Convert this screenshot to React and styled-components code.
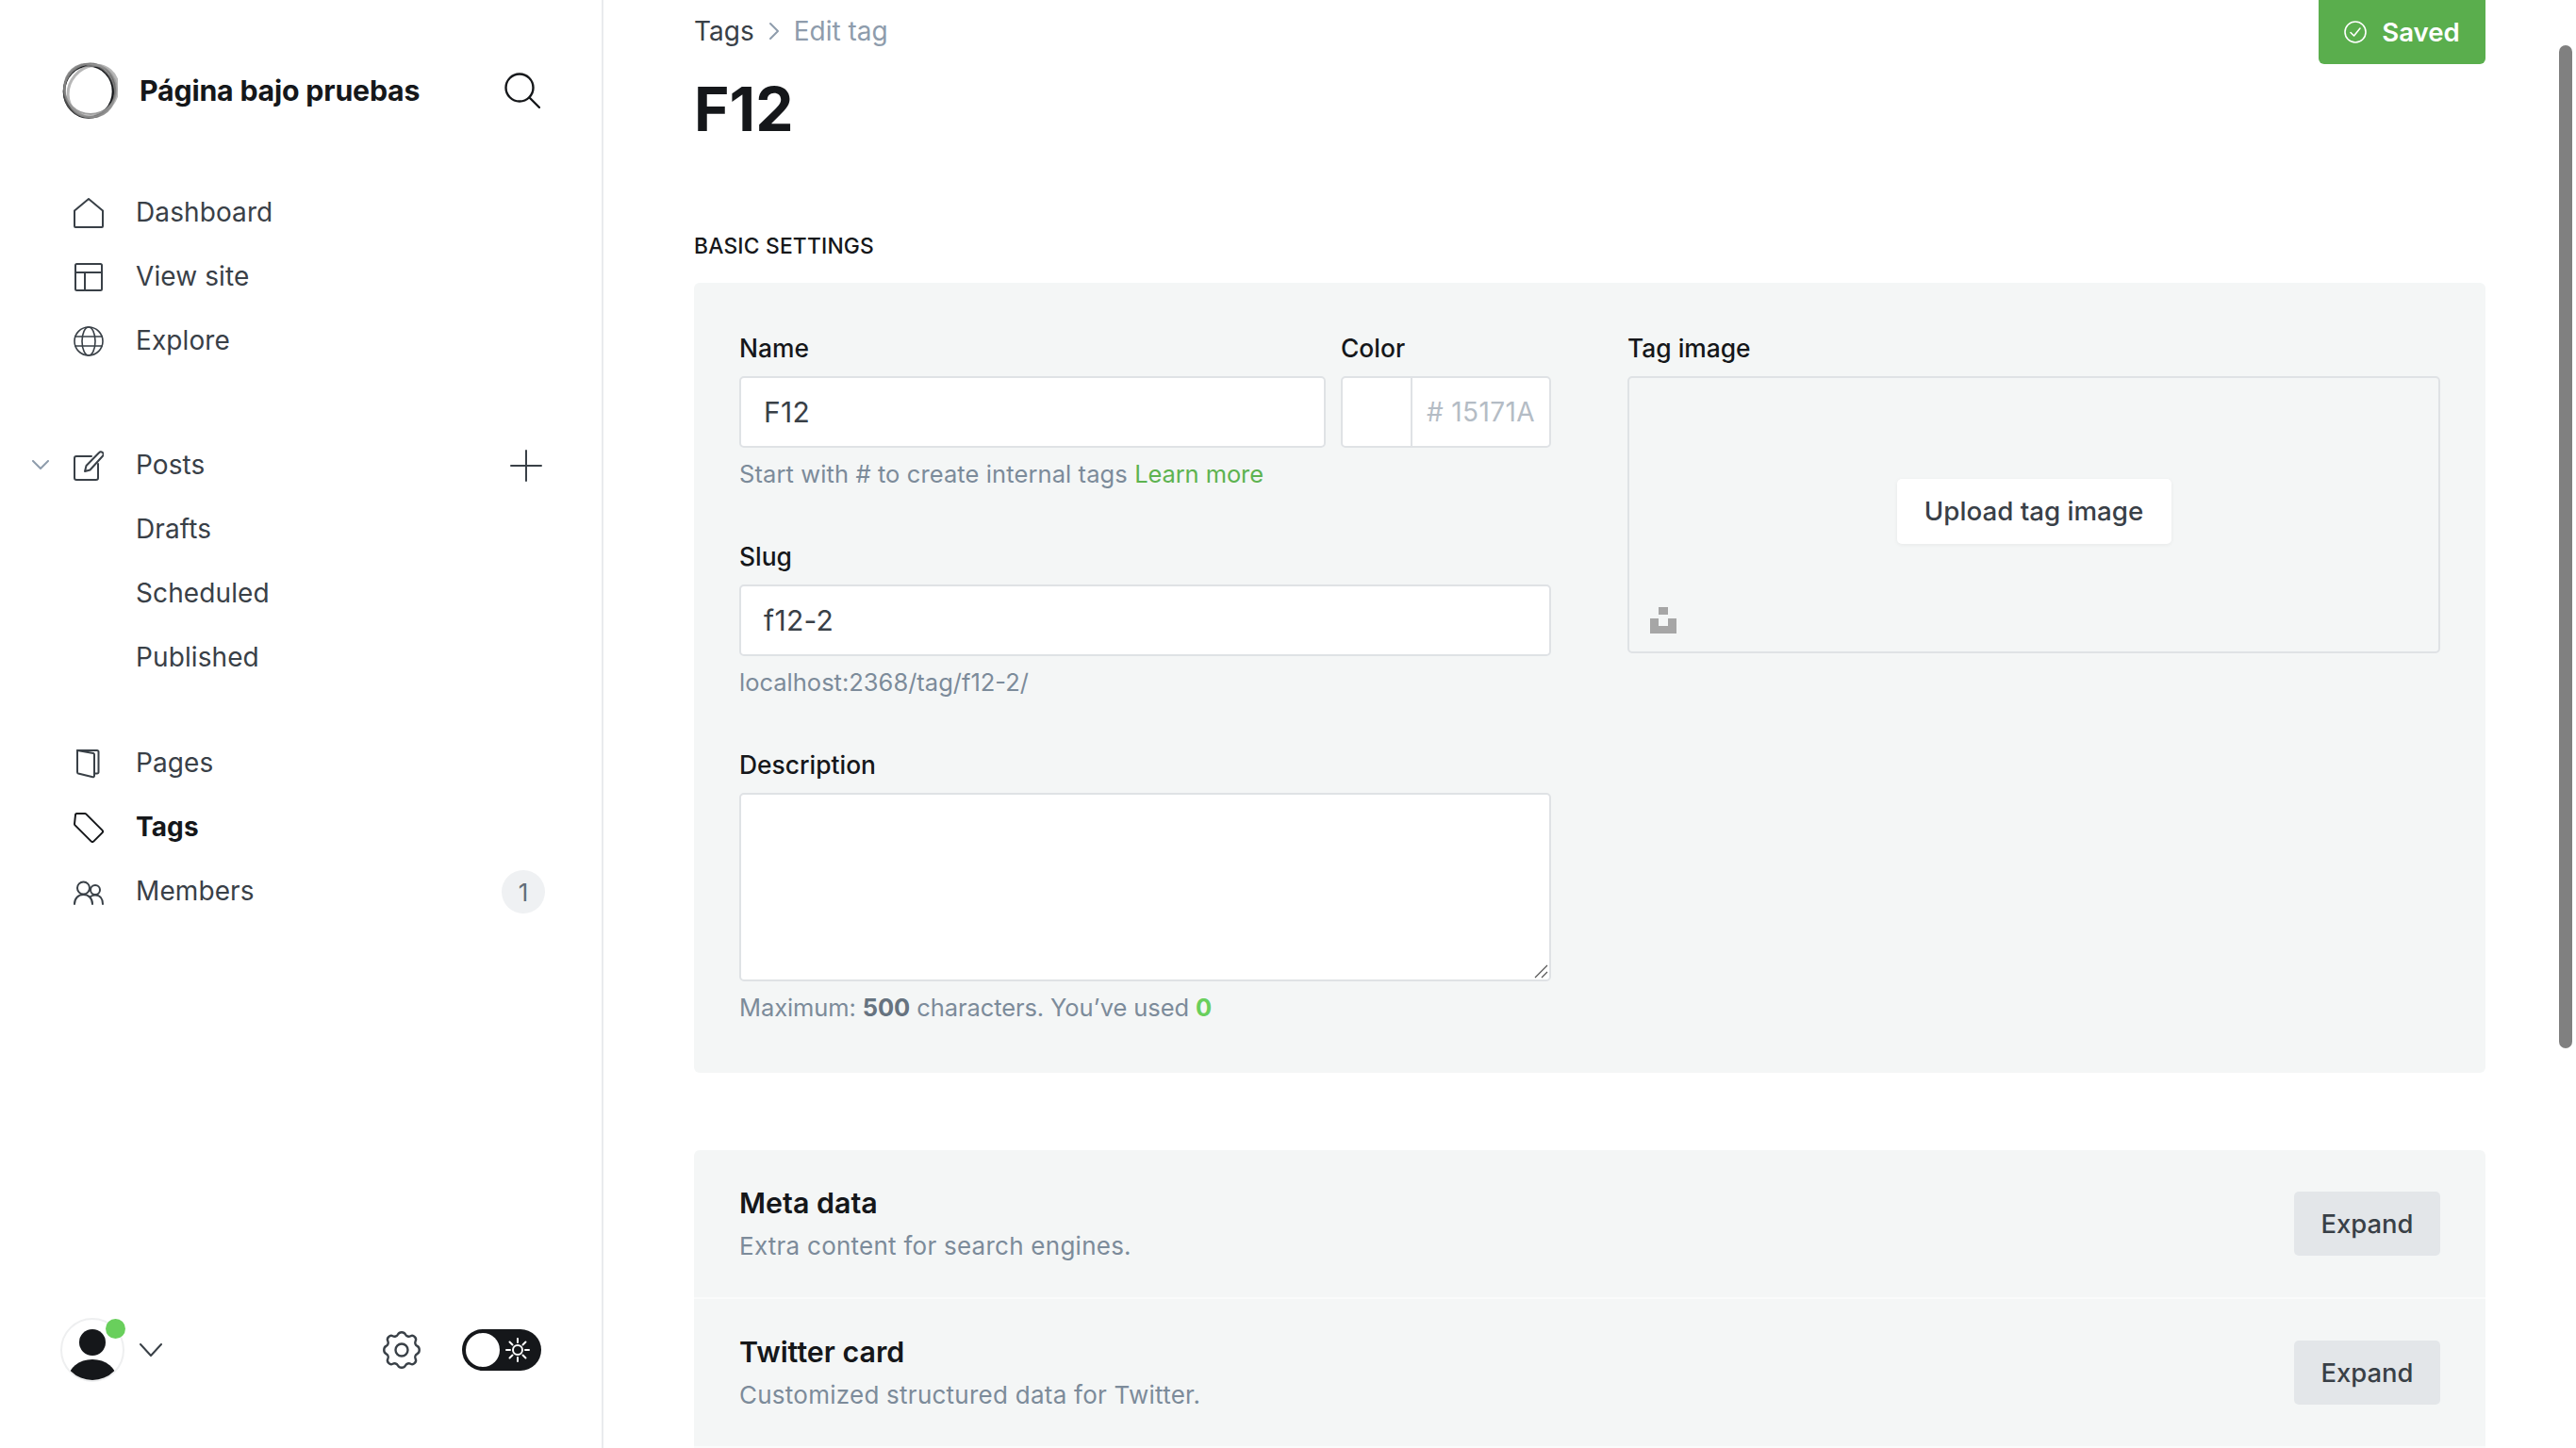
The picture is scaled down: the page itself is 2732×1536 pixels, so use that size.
import React from "react";
import styled, { createGlobalStyle } from "styled-components";

const Global = createGlobalStyle`
  html, body { margin: 0; padding: 0; background: #fff; overflow: hidden; }
  body { font-family: Inter, "Liberation Sans", sans-serif; color: #15171a; }
  * { box-sizing: border-box; }
`;

const Shell = styled.div`
  display: flex;
  width: 2732px;
  height: 1536px;
  position: relative;
  overflow: hidden;
`;

const Aside = styled.aside`
  width: 640px;
  flex: none;
  height: 100%;
  border-right: 2px solid #e9ebed;
  display: flex;
  flex-direction: column;
`;

const Brand = styled.div`
  display: flex;
  align-items: center;
  height: 64px;
  margin-top: 64px;
  padding: 0 65px;
`;

const SiteTitle = styled.div`
  margin-left: 23px;
  font-size: 30.3px;
  font-weight: 700;
  letter-spacing: -0.2px;
  flex: 1;
  white-space: nowrap;
`;

const SearchButton = styled.span`
  display: flex;
`;

const NavGroup = styled.nav`
  margin-top: ${(p) => p.$top}px;
  display: flex;
  flex-direction: column;
`;

const NavRow = styled.div`
  height: 68px;
  display: flex;
  align-items: center;
  padding: 0 60px 0 ${(p) => (p.$chevron ? 34 : 78)}px;
  font-size: 28px;
  letter-spacing: 0.1px;
  font-weight: ${(p) => (p.$active ? 700 : 400)};
  color: ${(p) => (p.$active ? "#15171a" : "#394047")};
`;

const NavChevron = styled.span`
  display: flex;
  width: 44px;
  flex: none;
`;

const NavIcon = styled.span`
  display: flex;
  justify-content: center;
  width: 32px;
  margin-right: 34px;
  margin-top: 2px;
  flex: none;
`;

const SubRow = styled(NavRow)`
  padding-left: 144px;
`;

const Trailing = styled.span`
  margin-left: auto;
  display: flex;
  align-items: center;
  margin-right: ${(p) => p.$inset || 0}px;
  margin-top: 2px;
`;

const Badge = styled.span`
  width: 46px;
  height: 46px;
  border-radius: 50%;
  background: #eff1f3;
  color: #626d79;
  font-size: 26px;
  display: flex;
  align-items: center;
  justify-content: center;
`;

const Footer = styled.div`
  margin-top: auto;
  margin-bottom: 70px;
  height: 68px;
  padding: 0 64px;
  display: flex;
  align-items: center;
`;

const Avatar = styled.span`
  position: relative;
  width: 68px;
  height: 68px;
  border-radius: 50%;
  border: 2px solid #eeeff0;
  background: #fff;
  display: block;
  flex: none;
  overflow: visible;
`;

const OnlineDot = styled.span`
  position: absolute;
  top: -1px;
  right: -3px;
  width: 21px;
  height: 21px;
  border-radius: 50%;
  background: #69cf5c;
`;

const FooterChevron = styled.span`
  display: flex;
  margin-left: 16px;
`;

const GearButton = styled.span`
  display: flex;
  margin-left: auto;
  margin-right: 43px;
`;

const Toggle = styled.span`
  width: 84px;
  height: 44px;
  border-radius: 22px;
  background: #15171a;
  display: flex;
  align-items: center;
  justify-content: space-between;
  padding: 0 12px 0 4px;
`;

const Knob = styled.span`
  width: 36px;
  height: 36px;
  border-radius: 50%;
  background: #fff;
`;

const Main = styled.main`
  flex: 1;
  min-width: 0;
  height: 100%;
  overflow: hidden;
  padding: 0 96px;
`;

const PageHead = styled.header`
  display: flex;
  justify-content: space-between;
  align-items: flex-start;
`;

const Crumbs = styled.div`
  height: 66px;
  display: flex;
  align-items: center;
  font-size: 28px;
  color: #394047;
`;

const CrumbSep = styled.span`
  display: flex;
  margin: 0 15px;
`;

const CrumbCurrent = styled.span`
  color: #8e9cac;
`;

const Title = styled.h1`
  margin: 14px 0 0;
  font-size: 64px;
  line-height: 72px;
  font-weight: 700;
  letter-spacing: 0;
`;

const SavedButton = styled.button`
  height: 68px;
  width: 177px;
  border: 0;
  border-radius: 0 0 6px 6px;
  background: #5aae4d;
  color: #fff;
  font: 600 27.6px Inter, sans-serif;
  display: flex;
  align-items: center;
  justify-content: center;
  gap: 16px;
`;

const SectionLabel = styled.h2`
  margin: 94px 0 0;
  font-size: 22.8px;
  line-height: 30px;
  font-weight: 500;
  letter-spacing: 0.2px;
  text-transform: uppercase;
`;

const Card = styled.section`
  margin-top: 24px;
  background: #f4f6f6;
  border-radius: 6px;
  padding: 54px 48px 54px 48px;
  display: grid;
  grid-template-columns: 861px 1fr;
  column-gap: 81px;
`;

const Column = styled.div`
  display: flex;
  flex-direction: column;
`;

const Field = styled.div`
  margin-bottom: ${(p) => p.$gap || 0}px;
`;

const NameRow = styled.div`
  display: grid;
  grid-template-columns: 622px 223px;
  column-gap: 16px;
`;

const Label = styled.label`
  display: block;
  height: 30px;
  line-height: 30px;
  font-size: 26.4px;
  font-weight: 500;
  margin-bottom: 15px;
  color: #15171a;
`;

const TextBox = styled.div`
  height: 76px;
  background: #fff;
  border: 2px solid #dfe2e5;
  border-radius: 5px;
  padding: 0 24px;
  display: flex;
  align-items: center;
  font-size: 30px;
  letter-spacing: 0.3px;
  color: #394047;
`;

const ColorBox = styled.div`
  height: 76px;
  background: #fff;
  border: 2px solid #dfe2e5;
  border-radius: 5px;
  display: grid;
  grid-template-columns: 72px 1fr;
`;

const ColorValue = styled.div`
  border-left: 2px solid #dfe2e5;
  display: flex;
  align-items: center;
  justify-content: center;
  font-size: 28px;
  letter-spacing: 0.4px;
  color: #b4bcc5;
`;

const TextArea = styled.div`
  height: 200px;
  background: #fff;
  border: 2px solid #dfe2e5;
  border-radius: 5px;
  position: relative;
`;

const Grip = styled.svg`
  position: absolute;
  right: 1px;
  bottom: 1px;
`;

const Help = styled.p`
  margin: 13px 0 0;
  height: 30px;
  line-height: 30px;
  font-size: 25.5px;
  letter-spacing: ${(p) => p.$spacing || "0"};
  color: #7c8b9a;
  white-space: nowrap;
`;

const LearnMore = styled.a`
  color: #5db350;
  letter-spacing: -0.1px;
`;

const Strong = styled.b`
  font-weight: 700;
  color: #667380;
`;

const Used = styled.b`
  font-weight: 700;
  color: #69cf5c;
`;

const ImageBox = styled.div`
  height: 294px;
  border: 2px solid #dfe2e5;
  border-radius: 5px;
  position: relative;
  display: flex;
  align-items: center;
  justify-content: center;
  padding-bottom: 8px;
`;

const UploadButton = styled.button`
  width: 291px;
  height: 69px;
  border: 0;
  border-radius: 5px;
  background: #fff;
  box-shadow: 0 1px 4px rgba(0, 0, 0, 0.06);
  font: 500 27.7px Inter, sans-serif;
  color: #394047;
`;

const UnsplashMark = styled.svg`
  position: absolute;
  left: 22px;
  bottom: 19px;
`;

const Stack = styled.section`
  margin-top: 82px;
  border-radius: 6px 6px 0 0;
  overflow: hidden;
`;

const StackRow = styled.div`
  height: 158px;
  background: #f4f6f6;
  padding: 0 48px;
  display: flex;
  align-items: center;
  justify-content: space-between;
  border-bottom: 2px solid #fafbfb;
`;

const RowTitle = styled.div`
  font-size: 30.4px;
  line-height: 34px;
  font-weight: 600;
`;

const RowSub = styled.div`
  margin-top: 14px;
  font-size: 26px;
  letter-spacing: 0.25px;
  line-height: 30px;
  color: #7c8b9a;
`;

const ExpandButton = styled.button`
  width: 155px;
  height: 68px;
  border: 0;
  border-radius: 5px;
  background: #e3e6e9;
  color: #394047;
  font: 500 27.4px Inter, sans-serif;
`;

const ScrollThumb = styled.div`
  position: absolute;
  top: 48px;
  left: 2714px;
  width: 14px;
  height: 1064px;
  border-radius: 7px;
  background: #808080;
`;

const Ic = ({ size = 32, w, h, stroke = "#394047", sw = 2, children, vb }) => (
  <svg
    width={w || size}
    height={h || size}
    viewBox={vb || `0 0 ${w || size} ${h || size}`}
    fill="none"
    stroke={stroke}
    strokeWidth={sw}
    strokeLinecap="round"
    strokeLinejoin="round"
  >
    {children}
  </svg>
);

const Logo = () => (
  <svg width="60" height="60" viewBox="0 0 60 60" fill="none">
    <ellipse cx="29" cy="31" rx="26" ry="27.500" stroke="#15171a" strokeWidth="2.6" />
    <ellipse cx="30" cy="30" rx="27" ry="28.500" stroke="#555" strokeWidth="2" transform="rotate(18 30 30)" opacity=".85" />
    <ellipse cx="30" cy="30" rx="26" ry="29" stroke="#777" strokeWidth="2" transform="rotate(-30 30 30)" opacity=".8" />
    <ellipse cx="31" cy="28.500" rx="27.500" ry="26.500" stroke="#8a8a8a" strokeWidth="2" opacity=".8" />
    <ellipse cx="33" cy="28" rx="25" ry="28.500" stroke="#999" strokeWidth="3" transform="rotate(40 30 30)" opacity=".7" />
  </svg>
);

const navIcons = {
  home: (
    <Ic>
      <path d="M1 13.5 16 1l15 12.5V30a1 1 0 0 1-1 1H2a1 1 0 0 1-1-1z" />
    </Ic>
  ),
  site: (
    <Ic>
      <rect x="2" y="2" width="28" height="28" rx="1.5" />
      <path d="M2 11h28M12 11v19" />
    </Ic>
  ),
  globe: (
    <Ic sw={1.6}>
      <circle cx="16" cy="16" r="15" />
      <ellipse cx="16" cy="16" rx="7" ry="15" />
      <path d="M2 11h28M2 21h28" />
    </Ic>
  ),
  edit: (
    <Ic>
      <path d="M19 6H3a2 2 0 0 0-2 2v21a2 2 0 0 0 2 2h21a2 2 0 0 0 2-2V14" />
      <path d="M12 22l1.5-6L27 2.2a2.6 2.6 0 0 1 3.9 3.6L17.5 20.5z" />
    </Ic>
  ),
  pages: (
    <Ic>
      <path d="M4 2h21a1.5 1.5 0 0 1 1.5 1.5V25a1.5 1.5 0 0 1-1.5 1.5h-3" />
      <path d="M4 2l17 3a1.5 1.5 0 0 1 1 1.5V29a1.3 1.3 0 0 1-1.6 1.3L5 26.5A1.5 1.5 0 0 1 4 25z" />
    </Ic>
  ),
  tag: (
    <Ic stroke="#15171a">
      <path d="M2 2.5A1.5 1.5 0 0 1 3.5 1H12a2 2 0 0 1 1.4.6L30.4 18.6a2 2 0 0 1 0 2.8L21.4 30.4a2 2 0 0 1-2.8 0L1.6 13.4A2 2 0 0 1 1 12z" />
    </Ic>
  ),
  members: (
    <Ic>
      <g transform="translate(0 4)">
        <circle cx="10.5" cy="8" r="6.5" />
        <path d="M1 25c0-6 4-10 9.5-10S20 19 20 25" />
        <circle cx="23" cy="10" r="5" />
        <path d="M18 17c1.500-1 3.200-1.500 5-1.500 5 0 8 4 8 9.500" />
      </g>
    </Ic>
  ),
};

const Chevron = ({ w = 18, h = 10, stroke = "#8e9cac" }) => (
  <Ic w={w} h={h} stroke={stroke} vb={`0 0 ${w} ${h}`}>
    <path d={`M1 1l${w / 2 - 1} ${h - 2}L${w - 1} 1`} />
  </Ic>
);

const Sun = () => (
  <Ic size={26} stroke="#fff" sw={2}>
    <circle cx="13" cy="13" r="5" />
    <path d="M13 1v4M13 21v4M1 13h4M21 13h4M4.500 4.500l3 3M18.500 18.500l3 3M4.500 21.500l3-3M18.500 7.500l3-3" />
  </Ic>
);

const Gear = () => (
  <Ic w={42} h={42} stroke="#394047" sw={2.4} vb="0 0 42 42">
    <circle cx="21" cy="21" r="6.500" />
    <path d="M17 4.500c1.500-3 6.500-3 8 0 1 2 3.500 2.800 5.500 1.700 3-1.500 6.800 2.200 5.200 5.300-1 2-.2 4.400 1.800 5.400 3 1.500 3 6.700 0 8.200-2 1-2.800 3.400-1.800 5.400 1.600 3.100-2.200 6.800-5.200 5.300-2-1.100-4.500-.3-5.500 1.700-1.500 3-6.500 3-8 0-1-2-3.500-2.800-5.500-1.700-3 1.500-6.800-2.200-5.200-5.300 1-2 .2-4.400-1.800-5.400-3-1.500-3-6.700 0-8.200 2-1 2.800-3.400 1.800-5.400-1.600-3.100 2.200-6.800 5.200-5.300 2 1.100 4.500.3 5.500-1.700z" />
  </Ic>
);

const AvatarArt = () => (
  <svg width="64" height="64" viewBox="0 0 64 64">
    <defs>
      <clipPath id="avatarClip">
        <circle cx="32" cy="32" r="32" />
      </clipPath>
    </defs>
    <g clipPath="url(#avatarClip)" fill="#15171a">
      <ellipse cx="32" cy="24" rx="14" ry="14" />
      <ellipse cx="32" cy="63" rx="26" ry="21" />
    </g>
  </svg>
);

const CheckCircle = () => (
  <Ic size={24} stroke="#fff" sw={1.6}>
    <circle cx="12" cy="12" r="11" />
    <path d="M7 12.500l3.500 3.500L17 8" />
  </Ic>
);

const Row = ({ icon, children, chevron, active, trailing }) => (
  <NavRow $chevron={chevron} $active={active}>
    {chevron && (
      <NavChevron>
        <Chevron />
      </NavChevron>
    )}
    <NavIcon>{navIcons[icon]}</NavIcon>
    {children}
    {trailing}
  </NavRow>
);

export default function App() {
  return (
    <Shell>
      <Global />
      <Aside>
        <Brand>
          <Logo />
          <SiteTitle>Página bajo pruebas</SiteTitle>
          <SearchButton>
            <Ic w={38} h={38} stroke="#15171a" sw={2.4} vb="0 0 38 38">
              <circle cx="16" cy="16" r="14.500" />
              <path d="M26.500 26.500L37 37" />
            </Ic>
          </SearchButton>
        </Brand>
        <NavGroup $top={63}>
          <Row icon="home">Dashboard</Row>
          <Row icon="site">View site</Row>
          <Row icon="globe">Explore</Row>
        </NavGroup>
        <NavGroup $top={64}>
          <Row
            icon="edit"
            chevron
            trailing={
              <Trailing $inset={3}>
                <Ic size={34} sw={2}>
                  <path d="M17 1v32M1 17h32" />
                </Ic>
              </Trailing>
            }
          >
            Posts
          </Row>
          <SubRow>Drafts</SubRow>
          <SubRow>Scheduled</SubRow>
          <SubRow>Published</SubRow>
        </NavGroup>
        <NavGroup $top={44}>
          <Row icon="pages">Pages</Row>
          <Row icon="tag" active>
            Tags
          </Row>
          <Row
            icon="members"
            trailing={
              <Trailing>
                <Badge>1</Badge>
              </Trailing>
            }
          >
            Members
          </Row>
        </NavGroup>
        <Footer>
          <Avatar>
            <AvatarArt />
            <OnlineDot />
          </Avatar>
          <FooterChevron>
            <Chevron w={24} h={14} stroke="#394047" />
          </FooterChevron>
          <GearButton>
            <Gear />
          </GearButton>
          <Toggle>
            <Knob />
            <Sun />
          </Toggle>
        </Footer>
      </Aside>
      <Main>
        <PageHead>
          <div>
            <Crumbs>
              Tags
              <CrumbSep>
                <Ic w={12} h={20} stroke="#8e9cac" vb="0 0 12 20">
                  <path d="M2 2l8 8-8 8" />
                </Ic>
              </CrumbSep>
              <CrumbCurrent>Edit tag</CrumbCurrent>
            </Crumbs>
            <Title>F12</Title>
          </div>
          <SavedButton>
            <CheckCircle />
            Saved
          </SavedButton>
        </PageHead>
        <SectionLabel>Basic settings</SectionLabel>
        <Card>
          <Column>
            <NameRow>
              <div>
                <Label>Name</Label>
                <TextBox>F12</TextBox>
              </div>
              <div>
                <Label>Color</Label>
                <ColorBox>
                  <span />
                  <ColorValue># 15171A</ColorValue>
                </ColorBox>
              </div>
            </NameRow>
            <Field $gap={57}>
              <Help $spacing="0.1px">
                Start with # to create internal tags <LearnMore>Learn more</LearnMore>
              </Help>
            </Field>
            <Field $gap={57}>
              <Label>Slug</Label>
              <TextBox>f12-2</TextBox>
              <Help>localhost:2368/tag/f12-2/</Help>
            </Field>
            <Field>
              <Label>Description</Label>
              <TextArea>
                <Grip width="16" height="16" viewBox="0 0 16 16" fill="none" stroke="#555" strokeWidth="1.2">
                  <path d="M2 15L15 2M9 15l6-6" />
                </Grip>
              </TextArea>
              <Help $spacing="-0.1px">
                Maximum: <Strong>500</Strong> characters. You’ve used <Used>0</Used>
              </Help>
            </Field>
          </Column>
          <Column>
            <Label>Tag image</Label>
            <ImageBox>
              <UploadButton>Upload tag image</UploadButton>
              <UnsplashMark width="28" height="28" viewBox="0 0 28 28" fill="#a6a6a6">
                <path d="M9 0h10v8H9zM0 12h9v8h10v-8h9v16H0z" />
              </UnsplashMark>
            </ImageBox>
          </Column>
        </Card>
        <Stack>
          <StackRow>
            <div>
              <RowTitle>Meta data</RowTitle>
              <RowSub>Extra content for search engines.</RowSub>
            </div>
            <ExpandButton>Expand</ExpandButton>
          </StackRow>
          <StackRow>
            <div>
              <RowTitle>Twitter card</RowTitle>
              <RowSub>Customized structured data for Twitter.</RowSub>
            </div>
            <ExpandButton>Expand</ExpandButton>
          </StackRow>
        </Stack>
      </Main>
      <ScrollThumb />
    </Shell>
  );
}
